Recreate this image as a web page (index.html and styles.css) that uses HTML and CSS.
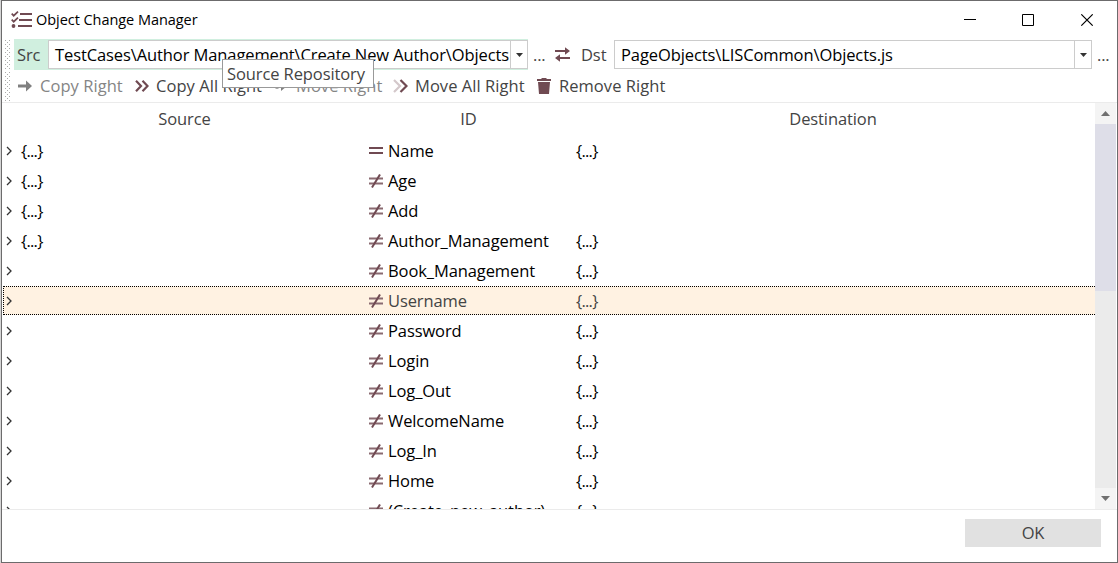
FILE: index.html
```
<!DOCTYPE html>
<html lang="en">
<head>
<meta charset="utf-8">
<title>Object Change Manager</title>
<link rel="stylesheet" href="styles.css">
</head>
<body>
<svg class="symbols" width="0" height="0" aria-hidden="true">
  <symbol id="chev" viewBox="0 0 6 10"><path d="M1 1l4 4-4 4" fill="none" stroke="#333" stroke-width="1.3"/></symbol>
  <symbol id="ne" viewBox="0 0 14 14"><path d="M0 4.500h14M0 9.500h14" stroke="#8a6a71" stroke-width="2"/><path d="M3 13.500L11 .5" stroke="#704a52" stroke-width="2"/></symbol>
  <symbol id="eq" viewBox="0 0 14 14"><path d="M0 4h14M0 9h14" fill="none" stroke="#704a52" stroke-width="2"/></symbol>
</svg>
<div class="window">
  <header class="titlebar">
    <svg class="app-icon" width="21" height="17" viewBox="0 0 21 17"><path d="M9 3h12M8 9h13M7 15h14" stroke="#704a52" stroke-width="2"/><path d="M.7 2.7l2 2L7 .6M.7 8.7l2 2L7 6.6" fill="none" stroke="#704a52" stroke-width="1.7"/><circle cx="2.5" cy="15" r="1.9" fill="#704a52"/></svg>
    <span class="title">Object Change Manager</span>
    <svg class="controls" width="130" height="12" viewBox="0 0 130 12"><path d="M0 5.5h12M58.500 .5h11v11h-11z" fill="none" stroke="#000"/><path d="M117.300 .3l11.400 11.400M128.700 .3l-11.400 11.400" stroke="#000" stroke-width="1.100"/></svg>
  </header>

  <div class="toolbar paths">
    <span class="grip"></span>
    <div class="src">
      <span class="src-label">Src</span>
      <div class="combo"><span class="value value-src">TestCases\Author Management\Create New Author\Objects</span><span class="drop"><svg width="7" height="4"><path d="M0 0h7L3.500 4z" fill="#333"/></svg></span></div>
    </div>
    <span class="dots">...</span>
    <svg class="swap" width="15" height="15" viewBox="0 0 15 15"><path d="M0 4h11M4 11h11" stroke="#704a52" stroke-width="2"/><path d="M10 .2L15 4l-5 3.800zM5 7.200L0 11l5 3.800z" fill="#704a52"/></svg>
    <span class="dst-label">Dst</span>
    <div class="combo combo-dst"><span class="value value-dst">PageObjects\LISCommon\Objects.js</span><span class="drop"><svg width="7" height="4"><path d="M0 0h7L3.500 4z" fill="#333"/></svg></span></div>
    <span class="dots dots-dst">...</span>
  </div>

  <div class="toolbar actions">
    <span class="grip"></span>
    <div class="action a1 disabled"><svg width="14" height="12" viewBox="0 0 14 12"><path d="M0 6h9" stroke="#808080" stroke-width="3"/><path d="M8 .5L14 6l-6 5.500z" fill="#808080"/></svg><span>Copy Right</span></div>
    <div class="action a2"><svg width="14" height="12" viewBox="0 0 14 12"><path d="M1 .8L6 6l-5 5.200M7.500 .8l5 5.200-5 5.200" fill="none" stroke="#704a52" stroke-width="2.200"/></svg><span>Copy All Right</span></div>
    <div class="action a3 disabled"><svg width="14" height="12" viewBox="0 0 14 12"><path d="M1.500 7.500h3" stroke="#aaa" stroke-width="3"/><path d="M7 .5L13 6 7 11z" fill="#808080"/></svg><span>Move Right</span></div>
    <div class="action a4"><svg width="15" height="14" viewBox="0 0 15 14"><path d="M1 1l6 6-6 6" fill="none" stroke="#d4c8cb" stroke-width="2.200"/><path d="M7.500 1l6 6-6 6" fill="none" stroke="#704a52" stroke-width="2.200"/></svg><span>Move All Right</span></div>
    <div class="action a5"><svg width="14" height="16" viewBox="0 0 14 16"><path d="M0 1h4l1-1h4l1 1h4v2H0zM1 4h12l-1 12H2z" fill="#704a52"/></svg><span>Remove Right</span></div>
  </div>

  <div class="content">
    <div class="grid">
      <div class="row head"><span>Source</span><span>ID</span><span>Destination</span></div>
      <div class="rows" id="rows"></div>
    </div>
    <div class="scrollbar">
      <span class="arrow"><svg width="9" height="5"><path d="M0 5h9L4.500 0z" fill="#707070"/></svg></span>
      <span class="thumb"></span>
      <span class="arrow end"><svg width="9" height="5"><path d="M0 0h9L4.500 5z" fill="#707070"/></svg></span>
    </div>
  </div>

  <footer class="footer"><button class="ok">OK</button></footer>
  <div class="tooltip">Source Repository</div>
</div>
<script src="rows.js"></script>
</body>
</html>
```
FILE: styles.css
```
* { box-sizing: border-box; }
body { margin: 0; width: 1118px; height: 563px; overflow: hidden; background: #d5d5d5; font: 16.5px/20px "Open Sans", "Noto Sans", sans-serif; color: #444; letter-spacing: -0.1px; }
svg { display: block; flex: none; }
.symbols { position: absolute; }
span { white-space: nowrap; }
.window { position: relative; margin-left: 1px; width: 1117px; height: 563px; border: 1px solid #6c6b6c; background: #fff; display: flex; flex-direction: column; }
.titlebar { height: 38px; flex: none; display: flex; align-items: center; padding: 0 23px 0 9px; color: #000; }
.title { margin-left: 4px; font-size: 14.5px; letter-spacing: -0.05px; }
.app-icon { margin-top: -1px; }
.controls { margin-left: auto; margin-top: -1px; }

.toolbar { display: flex; align-items: center; padding-left: 3px; flex: none; }
.paths { height: 31px; }
.actions { height: 32px; letter-spacing: 0.05px; }
.grip { flex: none; width: 6px; height: 29px; background: conic-gradient(from 270deg at 1px 1px, #aaa 90deg, transparent 0) 0 0 / 4px 4px, conic-gradient(from 270deg at 1px 1px, #aaa 90deg, transparent 0) 2px 2px / 4px 4px; }
.src { margin-left: 3px; height: 31px; width: 514px; display: flex; align-items: center; background: #d0efdf; flex: none; }
.src-label { width: 34px; padding-left: 3px; }
.combo { width: 480px; height: 29px; border: 1px solid #ccc; background: #fff; display: flex; color: #000; flex: none; }
.combo-dst { width: 478px; }
.value { flex: 1; min-width: 0; overflow: hidden; padding-left: 6px; line-height: 27px; }
.drop { width: 17px; border-left: 1px solid #ccc; display: flex; align-items: center; justify-content: center; }
.dots { width: 13px; margin-left: 5px; letter-spacing: -0.2px; }
.swap { margin-left: 9px; }
.dst-label { width: 33px; margin-left: 11px; }

.action { display: flex; align-items: center; flex: none; }
.action svg { margin-right: 8px; }
.disabled { color: #858585; }
.a1 { width: 117px; margin-left: 7px; }
.a2 { width: 139px; }
.a2 svg { margin-right: 7px; }
.a3 { width: 119px; }
.a4 { width: 144px; }
.a4 svg { margin-right: 7px; }

.content { height: 408px; flex: none; display: flex; border-top: 1px solid #ebebeb; border-bottom: 1px solid #ebebeb; overflow: hidden; }
.grid { width: 1093px; padding-left: 1px; }
.row { display: grid; grid-template-columns: 363px 205px 524px; height: 30px; align-items: center; color: #000; }
.head { height: 33px; padding-bottom: 2px; text-align: center; color: #444; }
.cell { display: flex; align-items: center; }
.tree { padding-left: 4px; }
.tree svg { margin: 0 9px 0 -1px; }
.id { padding-left: 3px; }
.id svg { margin-right: 5px; }
.dest { padding-left: 5px; }
.braces { letter-spacing: -0.75px; }
.selected { background: #fff2e2; height: 29px; margin-bottom: 1px; border: 1px dotted #000; border-right: 0; color: #444; }
.selected .cell { margin-left: -1px; }
.scrollbar { width: 21px; background: #ebebeb; display: flex; flex-direction: column; }
.arrow { height: 21px; background: #f4f4f4; display: flex; align-items: center; justify-content: center; }
.thumb { height: 167px; background: #dedee8; }
.end { margin-top: auto; }
.footer { display: flex; justify-content: flex-end; padding: 9px 16px 0 0; }
.ok { width: 136px; height: 28px; padding: 0; border: 0; background: #e1e1e1; color: #444; font: inherit; letter-spacing: inherit; }
.tooltip { position: absolute; left: 220px; top: 58px; width: 152px; height: 29px; padding-left: 4px; border: 1px solid #999; background: #fff; line-height: 27px; white-space: nowrap; }
```
FILE: rows.js
```
const data = [
  ["Name", true, true], ["Age", true, false], ["Add", true, false],
  ["Author_Management", true, true], ["Book_Management", false, true],
  ["Username", false, true], ["Password", false, true], ["Login", false, true],
  ["Log_Out", false, true], ["WelcomeName", false, true], ["Log_In", false, true],
  ["Home", false, true], ["(Create_new_author)", false, true]
];
const braces = '<span class="braces">{...}</span>';
document.getElementById("rows").innerHTML = data.map(([name, src, dst]) => `
  <div class="row${name === "Username" ? " selected" : ""}">
    <div class="cell tree"><svg width="6" height="10"><use href="#chev"/></svg>${src ? braces : ""}</div>
    <div class="cell id"><svg width="14" height="14"><use href="#${name === "Name" ? "eq" : "ne"}"/></svg><span>${name}</span></div>
    <div class="cell dest">${dst ? braces : ""}</div>
  </div>`).join("");
```
